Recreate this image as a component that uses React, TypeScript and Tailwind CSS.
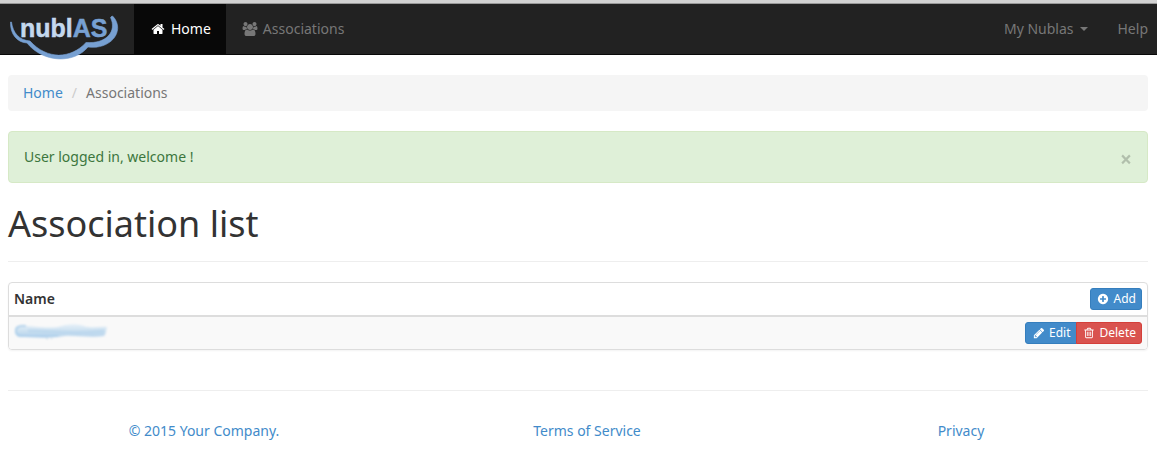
import type { ReactNode } from "react";

const paths = {
  home: "M1472 992v480q0 26-19 45t-45 19h-384v-384h-256v384h-384q-26 0-45-19t-19-45v-480q0-1 .5-3t.5-3l575-474 575 474q1 2 1 6zm223-69l-62 74q-8 9-21 11h-3q-13 0-21-7l-692-577-692 577q-12 8-24 7-13-2-21-11l-62-74q-8-10-7-23.500t11-21.500l719-599q32-26 76-26t76 26l244 204v-195q0-14 9-23t23-9h192q14 0 23 9t9 23v408l219 182q10 8 11 21.500t-7 23.500z",
  users: "M529 896q-162 5-265 128h-134q-82 0-138-40.500t-56-118.500q0-353 124-353 6 0 43.500 21t97.500 42.500 119 21.500q67 0 133-23-5 37-5 66 0 139 81 256zm1071 637q0 120-73 189.500t-194 69.500h-874q-121 0-194-69.500t-73-189.500q0-53 3.500-103.500t14-109 26.500-108.500 43-97.500 62-81 85.500-53.500 111.500-20q10 0 43 21.500t73 48 107 48 135 21.500 135-21.500 107-48 73-48 43-21.500q61 0 111.500 20t85.500 53.500 62 81 43 97.500 26.500 108.500 14 109 3.500 103.500zm-1024-1277q0 106-75 181t-181 75-181-75-75-181 75-181 181-75 181 75 75 181zm704 384q0 159-112.500 271.500t-271.500 112.500-271.500-112.500-112.500-271.500 112.500-271.500 271.500-112.500 271.500 112.500 112.500 271.500zm576 225q0 78-56 118.500t-138 40.500h-134q-103-123-265-128 81-117 81-256 0-29-5-66 66 23 133 23 59 0 119-21.500t97.500-42.500 43.500-21q124 0 124 353zm-128-609q0 106-75 181t-181 75-181-75-75-181 75-181 181-75 181 75 75 181z",
  plus: "M1344 960v-128q0-26-19-45t-45-19h-256v-256q0-26-19-45t-45-19h-128q-26 0-45 19t-19 45v256h-256q-26 0-45 19t-19 45v128q0 26 19 45t45 19h256v256q0 26 19 45t45 19h128q26 0 45-19t19-45v-256h256q26 0 45-19t19-45zm320-64q0 209-103 385.500t-279.500 279.500-385.500 103-385.500-103-279.500-279.500-103-385.500 103-385.500 279.500-279.500 385.500-103 385.500 103 279.500 279.500 103 385.500z",
  pencil: "M491 1536l91-91-235-235-91 91v107h128v128h107zm523-928q0-22-22-22-10 0-17 7l-542 542q-7 7-7 17 0 22 22 22 10 0 17-7l542-542q7-7 7-17zm-54-192l416 416-832 832h-416v-416zm683 96q0 53-37 90l-166 166-416-416 166-165q36-38 90-38 53 0 91 38l235 234q37 39 37 91z",
  trash: "M704 736v576q0 14-9 23t-23 9h-64q-14 0-23-9t-9-23v-576q0-14 9-23t23-9h64q14 0 23 9t9 23zm256 0v576q0 14-9 23t-23 9h-64q-14 0-23-9t-9-23v-576q0-14 9-23t23-9h64q14 0 23 9t9 23zm256 0v576q0 14-9 23t-23 9h-64q-14 0-23-9t-9-23v-576q0-14 9-23t23-9h64q14 0 23 9t9 23zm128 724v-948h-896v948q0 22 7 40.500t14.500 27 10.500 8.500h832q3 0 10.500-8.500t14.500-27 7-40.500zm-672-1076h448l-48-117q-7-9-17-11h-317q-10 2-17 11zm928 32v64q0 14-9 23t-23 9h-96v948q0 83-47 143.500t-113 60.500h-832q-66 0-113-58.500t-47-141.500v-952h-96q-14 0-23-9t-9-23v-64q0-14 9-23t23-9h309l70-167q15-37 54-63t79-26h320q40 0 79 26t54 63l70 167h309q14 0 23 9t9 23z",
};

function Icon({ name, className }: { name: keyof typeof paths; className: string }) {
  return (
    <svg viewBox={name === "users" ? "-64 0 1920 1792" : "0 0 1792 1792"} className={className} fill="currentColor" aria-hidden="true">
      <path d={paths[name]} />
    </svg>
  );
}

function Logo() {
  return (
    <svg width="110" height="38" viewBox="0 0 110 38" className="overflow-visible" role="img" aria-label="nublAS">
      <path
        d="M0.500 7C0 19 7 27.500 17 28C33 48 64 49 78 32C100 35 115 17 104 2.500Q102 -0.500 100.500 2.500C107 16 97 29 76 27.500C61 44 37 45 20 26C9 25 3 18 1.500 7Z"
        fill="#77a0d2"
        stroke="#77a0d2"
        strokeWidth="0.600"
        strokeLinejoin="round"
      />
      <text x="10" y="22" fontSize="25" fontWeight="700" fontFamily="Liberation Sans, sans-serif" fill="#c4d8ee" stroke="#c4d8ee" strokeWidth="0.500">
        nubl<tspan fill="#77a0d2" stroke="#77a0d2">AS</tspan>
      </text>
    </svg>
  );
}

function BrushedName() {
  return (
    <svg width="96" height="20" viewBox="0 0 96 20" className="block overflow-visible" aria-hidden="true">
      <defs>
        <filter id="soft" x="-10%" y="-30%" width="120%" height="160%">
          <feGaussianBlur stdDeviation="0.900" />
        </filter>
        <linearGradient id="brush" x1="0" y1="0" x2="0" y2="1">
          <stop offset="0" stopColor="#e6f0f8" />
          <stop offset="0.550" stopColor="#c9dff0" />
          <stop offset="1" stopColor="#b4d2ec" />
        </linearGradient>
      </defs>
      <g filter="url(#soft)">
        <path d="M3 3C12 2 30 6 44 4C52 1 62 0 70 3C78 6 86 3 93 4C92 8 92 11 90 13C76 15 62 12 50 13C34 16 18 14 5 14C0 13 0 4 3 3Z" fill="url(#brush)" />
        <path d="M12 3C6 2 1 4 2 9C2 13 7 13 14 13H44" fill="none" stroke="#a9cdea" strokeWidth="1.500" />
        <path d="M14 8C36 7 54 12 90 8" fill="none" stroke="#bdd8ee" strokeWidth="3" />
        <path d="M32 15l2 1M37 15l1 1" stroke="#b9cfe2" />
      </g>
    </svg>
  );
}

function SmallButton({ icon, className, children }: { icon: keyof typeof paths; className: string; children: ReactNode }) {
  return (
    <button type="button" className={`inline-flex h-[22px] items-center gap-[3px] border px-[5px] text-[12px] leading-[18px] text-white ${className}`}>
      <span className="flex w-[15px] justify-center"><Icon name={icon} className="size-3" /></span>
      {children}
    </button>
  );
}

export default function App() {
  return (
    <div className="bg-white font-['Noto_Sans',sans-serif] text-[14px] leading-[20px] text-[#333]">
      <div className="h-1 border-b border-[#999] bg-[#d2d2d2]" />
      <nav className="flex h-[51px] items-stretch border-b border-[#080808] bg-[#222] text-[#777]">
        <a href="#" className="w-[134px] pt-[11px] pl-[10px]"><Logo /></a>
        <a href="#" className="flex items-center gap-1 bg-[#080808] px-[15px] text-white">
          <Icon name="home" className="h-[14px] w-[18px]" />Home
        </a>
        <a href="#" className="flex items-center gap-1 px-[15px]">
          <Icon name="users" className="h-[14px] w-[18px]" />Associations
        </a>
        <div className="ml-auto flex pr-[9px]">
          <button type="button" className="flex items-center gap-[6px] px-[15px]">
            My Nublas
            <span className="border-x-4 border-t-4 border-x-transparent border-t-current" />
          </button>
          <a href="#" className="flex items-center pl-[15px]">Help</a>
        </div>
      </nav>

      <main className="pt-5 pr-[9px] pl-2">
        <nav aria-label="Breadcrumb">
          <ol className="flex rounded bg-[#f5f5f5] px-[15px] py-2">
            <li><a href="#" className="text-[#428bca]">Home</a></li>
            <li className="px-[9px] text-[#ccc]" aria-hidden="true">/</li>
            <li className="text-[#777]">Associations</li>
          </ol>
        </nav>

        <div role="alert" className="mt-5 flex items-center justify-between rounded border border-[#d6e9c6] bg-[#dff0d8] p-[15px] text-[#3c763d]">
          User logged in, welcome !
          <button type="button" aria-label="Close" className="pt-1 text-[21px] leading-4 font-bold text-black opacity-20">×</button>
        </div>

        <h1 className="mt-5 border-b border-[#eee] pt-px pb-[17px] text-[36px] leading-[40px]">Association list</h1>

        <div className="mt-5 overflow-hidden rounded border border-[#ddd] shadow-xs">
          <table className="w-full">
            <thead>
              <tr className="border-b-2 border-[#ddd]">
                <th className="px-[5px] text-left font-semibold">Name</th>
                <th className="flex justify-end p-[5px] font-normal">
                  <SmallButton icon="plus" className="rounded-[3px] border-[#357ebd] bg-[#428bca]">Add</SmallButton>
                </th>
              </tr>
            </thead>
            <tbody>
              <tr className="bg-[#f9f9f9]">
                <td className="px-[5px]"><BrushedName /></td>
                <td className="flex justify-end p-[5px]">
                  <SmallButton icon="pencil" className="rounded-l-[3px] border-[#357ebd] bg-[#428bca]">Edit</SmallButton>
                  <SmallButton icon="trash" className="-ml-px rounded-r-[3px] border-[#d43f3a] bg-[#d9534f]">Delete</SmallButton>
                </td>
              </tr>
            </tbody>
          </table>
        </div>

        <footer className="mt-10 grid grid-cols-[392fr_374fr_374fr] border-t border-[#eee] py-[30px] text-center text-[#428bca]">
          <a href="#">© 2015 Your Company.</a>
          <a href="#">Terms of Service</a>
          <a href="#">Privacy</a>
        </footer>
      </main>
    </div>
  );
}
